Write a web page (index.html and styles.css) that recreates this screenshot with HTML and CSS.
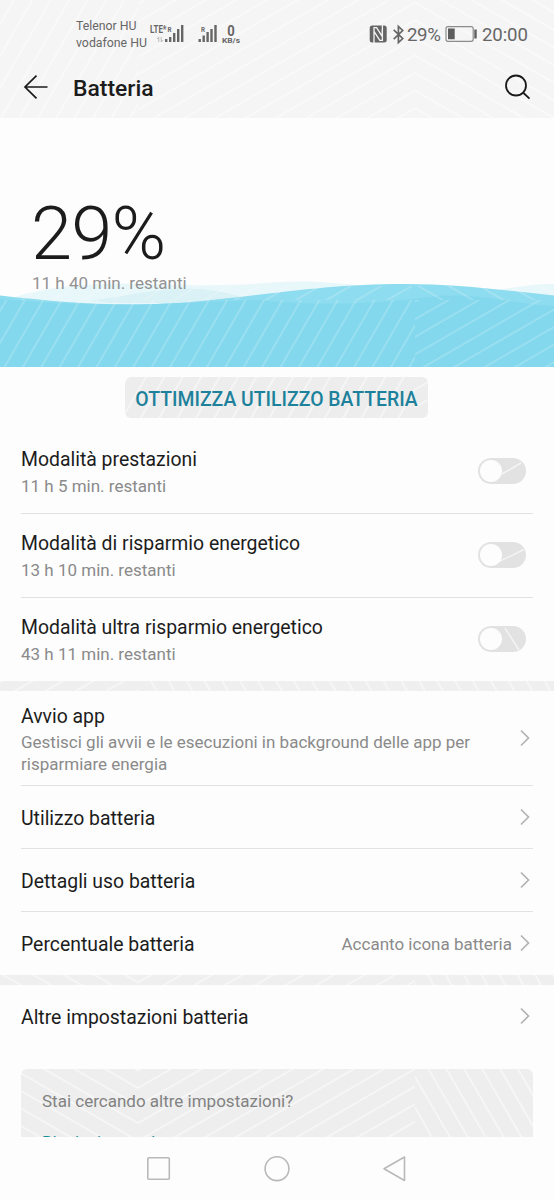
FILE: index.html
```html
<!DOCTYPE html>
<html lang="it">
<head>
<meta charset="utf-8">
<title>Batteria</title>
<link rel="stylesheet" href="styles.css">
</head>
<body>
<div class="screen">
  <header class="header">
    <div class="status">
      <div class="carriers"><span>Telenor HU</span><span>vodafone HU</span></div>
      <svg class="signals" width="96" height="26" viewBox="148 20 96 26">
        <g fill="#666">
          <text x="150" y="33" class="net" textLength="16.500" lengthAdjust="spacingAndGlyphs">LTE*</text>
          <text x="167.500" y="31.500" class="tiny" textLength="4" lengthAdjust="spacingAndGlyphs">R</text>
          <text x="201" y="31.500" class="tiny" textLength="4" lengthAdjust="spacingAndGlyphs">R</text>
          <path d="M165 39h2.400v3H165zM169 37h2.400v5H169zM173 33h2.400v9H173zM177 29h2.400v13H177zM181 25h2.400v17H181z"/>
          <path d="M198.500 39h2.400v3h-2.400zM202.500 35.500h2.400v6.500h-2.400zM206.400 32h2.400v10h-2.400zM210.300 29h2.400v13h-2.400zM214.300 25h2.400v17h-2.400z"/>
          <text x="227.300" y="35.600" class="zero" textLength="7.500" lengthAdjust="spacingAndGlyphs">0</text>
          <text x="222" y="43" class="kb" textLength="18" lengthAdjust="spacingAndGlyphs">KB/s</text>
        </g>
        <path d="M157 39l1.800-2v5M163 40l-1.800 2v-5" fill="none" stroke="#bbb" stroke-width="1"/>
      </svg>
      <svg class="radio" width="36" height="22" viewBox="368 23 36 22">
        <rect x="369.700" y="25.500" width="17" height="17" rx="2.500" fill="#666"/>
        <path d="M374 43V27.600h2.600l5.600 8.800V29.500M382.400 25v15.400h-2.600l-5.600-8.800" fill="none" stroke="#f5f5f5" stroke-width="1.300"/>
        <path d="M393.700 29.800l9 8.700-4.300 4V26.500l4.300 4-9 8.700" fill="none" stroke="#666" stroke-width="1.700"/>
      </svg>
      <span class="pct">29%</span>
      <svg class="cell" width="33" height="18" viewBox="445 25 33 18">
        <rect x="446" y="26.700" width="27.200" height="14.600" rx="2" fill="none" stroke="#8c8c8c" stroke-width="1.200"/>
        <path fill="#5d5d5d" d="M448 28.500h6.700v10.800H448zM474.300 29.500h2.400v9h-2.400z"/>
      </svg>
      <span class="clock">20:00</span>
    </div>
    <div class="titlebar">
      <svg class="back" width="26" height="26" viewBox="23 74 26 26"><path d="M47.500 87H25M36.500 75.700L25 87l11.500 11.300" fill="none" stroke="#1a1a1a" stroke-width="1.700"/></svg>
      <h1>Batteria</h1>
      <svg class="search" width="28" height="28" viewBox="503 73 28 28"><g fill="none" stroke="#1a1a1a" stroke-width="1.800"><circle cx="516" cy="85.500" r="10"/><path d="M523 92.500l6.500 6.200"/></g></svg>
    </div>
  </header>

  <section class="hero">
    <svg class="waves" width="554" height="90" viewBox="0 277 554 90">
      <path fill="#e8f7fa" d="M15 297C50 286 90 283 140 284S230 287 277 282C330 279 370 288 430 292S520 283 554 284V367H0z"/>
      <path fill="#daf1f6" d="M90 301C130 295 170 286 200 289S245 299 277 303H110z"/>
      <path fill="#8edcef" d="M0 295.500C50 301 90 305 140 304.500C230 303 300 284 405 284C460 284 510 291 554 295.500V367H0z"/>
      <path fill="#83d8ed" d="M0 299C50 303 90 305 140 304.500C190 303 220 301 255 300C330 307 380 303 430 297S520 306 554 306V367H0z"/>
    </svg>
    <div class="level">29%</div>
    <div class="remain">11 h 40 min. restanti</div>
  </section>

  <div class="action"><button class="optimize"><span>OTTIMIZZA UTILIZZO BATTERIA</span></button></div>

  <section class="group">
    <div class="row mode"><div class="copy"><b>Modalità prestazioni</b><small>11 h 5 min. restanti</small></div><i class="toggle"></i></div>
    <div class="row mode"><div class="copy"><b>Modalità di risparmio energetico</b><small>13 h 10 min. restanti</small></div><i class="toggle"></i></div>
    <div class="row mode"><div class="copy"><b>Modalità ultra risparmio energetico</b><small>43 h 11 min. restanti</small></div><i class="toggle"></i></div>
  </section>
  <div class="gap"></div>
  <section class="group">
    <div class="row launch"><div class="copy"><b>Avvio app</b><small>Gestisci gli avvii e le esecuzioni in background delle app per risparmiare energia</small></div><svg class="chev" width="12" height="18" viewBox="0 0 12 18"><path d="M2 1.500L9.500 9 2 16.500"/></svg></div>
    <div class="row link"><b>Utilizzo batteria</b><svg class="chev" width="12" height="18" viewBox="0 0 12 18"><path d="M2 1.500L9.500 9 2 16.500"/></svg></div>
    <div class="row link"><b>Dettagli uso batteria</b><svg class="chev" width="12" height="18" viewBox="0 0 12 18"><path d="M2 1.500L9.500 9 2 16.500"/></svg></div>
    <div class="row link"><b>Percentuale batteria</b><span class="value">Accanto icona batteria</span><svg class="chev" width="12" height="18" viewBox="0 0 12 18"><path d="M2 1.500L9.500 9 2 16.500"/></svg></div>
  </section>
  <div class="gap"></div>
  <section class="group">
    <div class="row link"><b>Altre impostazioni batteria</b><svg class="chev" width="12" height="18" viewBox="0 0 12 18"><path d="M2 1.500L9.500 9 2 16.500"/></svg></div>
  </section>
  <aside class="hint"><p>Stai cercando altre impostazioni?</p><a>Risoluzione schermo</a></aside>

  <nav class="nav">
    <svg width="554" height="63" viewBox="0 1137 554 63"><g fill="none" stroke="#b9b9b9" stroke-width="1.600" stroke-linejoin="round"><rect x="147.800" y="1157.800" width="21.500" height="21.500" rx="1"/><circle cx="277" cy="1168.700" r="11.900"/><path d="M384 1168.700L404.500 1157v23.500z"/></g></svg>
  </nav>

  <svg class="weave" width="554" height="1200" viewBox="0 0 554 1200">
    <defs>
      <pattern id="up" width="200" height="15.240" patternUnits="userSpaceOnUse" patternTransform="translate(415 2.500) rotate(-30) translate(0 -7.600)"><path d="M-1 7.600H201"/></pattern>
      <pattern id="down" width="200" height="15.240" patternUnits="userSpaceOnUse" patternTransform="translate(415 2.500) rotate(30) translate(0 -7.600)"><path d="M-1 7.600H201"/></pattern>
      <pattern id="steepUp" width="200" height="15.940" patternUnits="userSpaceOnUse" patternTransform="translate(5 366) rotate(-60) translate(0 -7.900)"><path d="M-1 7.900H201"/></pattern>
      <pattern id="steepDown" width="200" height="15.500" patternUnits="userSpaceOnUse" patternTransform="translate(432 1137) rotate(60) translate(0 -7.700)"><path d="M-1 7.700H201"/></pattern>
      <pattern id="cardUp" width="200" height="15.240" patternUnits="userSpaceOnUse" patternTransform="translate(138 1088) rotate(-30) translate(0 -7.600)"><path d="M-1 7.600H201"/></pattern>
      <pattern id="cardDown" width="200" height="15.240" patternUnits="userSpaceOnUse" patternTransform="translate(138 1088) rotate(30) translate(0 -7.600)"><path d="M-1 7.600H201"/></pattern>
    </defs>
    <g class="strong">
      <path fill="url(#steepUp)" d="M0 0h138v118H0zM125 377h290v41H125z"/>
      <path fill="url(#up)" d="M138 0h277v118H138zM415 377h13v41h-13zM0 681h138v10H0z"/>
      <path fill="url(#down)" d="M415 0h139v118H415z"/>
      <path fill="url(#steepDown)" d="M138 681h416v10H138zM415 975h139v10H415zM415 1069h118v68H415z"/>
      <path fill="url(#cardDown)" d="M0 975h138v10H0zM21 1069h117v68H21z"/>
      <path fill="url(#cardUp)" d="M138 975h277v10H138zM138 1069h277v68H138z"/>
      <path class="line" d="M502 474l19-11M494 564l30-14.500M505 628l14 22"/>
    </g>
    <g class="faint">
      <path fill="url(#steepUp)" d="M0 300h415v67H0z"/>
      <path fill="url(#up)" d="M415 300h139v67H415zM20 286h395v14H20z"/>
      <path fill="url(#down)" d="M415 286h139v14H415z"/>
    </g>
  </svg>
</div>
</body>
</html>
```
FILE: styles.css
```css
* { box-sizing: border-box; }
body { margin: 0; background: #fdfdfd; font-family: Roboto, sans-serif; color: #1c1c1c; }
.screen { position: relative; width: 554px; height: 1200px; overflow: hidden; display: flex; flex-direction: column; }
.header { height: 118px; flex: none; background: #f5f5f5; }
.status { height: 62px; padding: 18px 0 0 76px; display: flex; align-items: flex-start; color: #666; }
.carriers { width: 72px; display: flex; flex-direction: column; font-size: 12.3px; line-height: 16.5px; white-space: nowrap; }
.status > *, .titlebar > *, .level, .remain, .optimize span, .hint p, .hint a, .toggle::before { position: relative; z-index: 2; }
.signals { margin-top: 2px; flex: none; }
.net { font: 700 11px Roboto, sans-serif; }
.tiny { font: 700 8px Roboto, sans-serif; }
.zero { font: 700 14.5px Roboto, sans-serif; }
.kb { font: 700 8px Roboto, sans-serif; }
.radio { margin: 5px 0 0 124px; flex: none; }
.pct { width: 38px; margin-left: 3px; font-size: 18.7px; line-height: 34px; letter-spacing: -.4px; }
.cell { margin: 7px 0 0 0; flex: none; }
.clock { margin-left: 4px; font-size: 18.6px; line-height: 34px; letter-spacing: -.1px; }
.titlebar { height: 56px; display: flex; align-items: center; padding: 0 23px; }
.titlebar svg { margin-top: -6px; }
h1 { margin: -3px auto 0 24px; font-size: 22.9px; line-height: 28px; font-weight: 500; }
.hero { height: 249px; flex: none; position: relative; padding: 79px 0 0 32px; }
.waves { position: absolute; left: 0; bottom: 0; }
.level { height: 77px; margin-left: -1px; font-weight: 300; font-size: 74px; line-height: 74px; letter-spacing: -.8px; }
.remain { font-size: 17px; line-height: 18px; color: #929292; }
.action { height: 62px; flex: none; padding-top: 10px; display: flex; justify-content: center; align-items: flex-start; }
.optimize { width: 303px; height: 41px; border: 0; border-radius: 6px; background: #ededed; padding: 3px 0 0; margin-right: 1px; font: 500 19.4px Roboto, sans-serif; color: #1d819b; white-space: nowrap; }
.group { padding: 0 21px; flex: none; }
.row { display: flex; align-items: center; }
.mode + .mode { box-shadow: inset 0 1px #e2e2e2; }
.row + .link { box-shadow: 0 -1px #e2e2e2; }
.row b { font-weight: 400; font-size: 19.4px; line-height: 26px; }
.copy { display: flex; flex-direction: column; flex: 1; }
.row small, .value { font-size: 17px; line-height: 22px; color: #8a8a8a; }
.mode { height: 84px; }
.mode .copy { padding-top: 1px; }
.mode small { margin-top: 2px; }
.toggle { width: 48px; height: 26px; margin-right: 7px; padding: 2px; border-radius: 13px; background: #e2e2e2; }
.toggle::before { content: ""; display: block; width: 22px; height: 22px; border-radius: 50%; background: #fdfdfd; }
.gap { height: 10px; flex: none; background: #efefef; }
.launch { height: 95px; }
.launch .copy { padding-top: 2px; }
.launch small { width: 470px; margin-top: 1px; }
.link { height: 63px; }
.link b { margin-right: auto; padding-top: 2px; }
.chev { margin: 0 2px 2px 7px; flex: none; fill: none; stroke: #b3b3b3; stroke-width: 1.700; }
.hint { height: 68px; flex: none; overflow: hidden; margin: 21px 21px 0; padding: 20px 21px 0; border-radius: 6px 6px 0 0; background: #eee; }
.hint p { margin: 0; font-size: 17px; line-height: 24px; color: #828282; }
.hint a { display: block; margin-top: 17px; font-size: 17px; line-height: 24px; color: #178da0; }
.nav { height: 63px; flex: none; background: #fdfdfd; }
.nav svg { display: block; }
.weave { position: absolute; left: 0; top: 0; z-index: 1; pointer-events: none; }
.weave pattern path, .line { stroke: #fff; stroke-width: 1.500; fill: none; }
.strong { opacity: .65; }
.faint { opacity: .25; }
```
